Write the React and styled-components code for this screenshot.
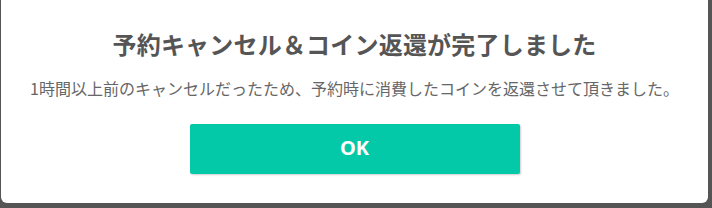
import React from 'react';
import styled, { createGlobalStyle } from 'styled-components';

const GlobalStyle = createGlobalStyle`
    html, body {
        margin: 0;
        padding: 0;
        background: #555555;
    }
    body {
        font-family: "Noto Sans CJK JP", "Noto Sans", sans-serif;
    }
`

const Overlay = styled.div`
    padding: 0 4px 5px 1px;
    background: #555555;
`

const Dialog = styled.div`
    background: #ffffff;
    border-radius: 0 0 6px 6px;
    padding: 28px 20px 29px;
    display: flex;
    flex-direction: column;
    align-items: center;
`

const Title = styled.h2`
    margin: 0;
    font-size: 24px;
    line-height: 32px;
    font-weight: 700;
    color: #555555;
    letter-spacing: 0.2px;
`

const Message = styled.p`
    margin: 16px 0 0;
    font-size: 16px;
    line-height: 24px;
    font-weight: 400;
    color: #666666;
`

const OkButton = styled.button`
    margin-top: 24px;
    width: 330px;
    height: 50px;
    padding: 0 0 3px;
    border: none;
    border-radius: 2px;
    background: #03c9a8;
    color: #ffffff;
    font-family: "Noto Sans", "Noto Sans CJK JP", sans-serif;
    font-size: 20px;
    font-weight: 700;
    box-shadow: 1px 1px 2px rgba(0, 0, 0, 0.2);
    cursor: pointer;
`

export default function App() {
    return (
        <>
            <GlobalStyle />
            <Overlay>
                <Dialog>
                    <Title>予約キャンセル＆コイン返還が完了しました</Title>
                    <Message>1時間以上前のキャンセルだったため、予約時に消費したコインを返還させて頂きました。</Message>
                    <OkButton>OK</OkButton>
                </Dialog>
            </Overlay>
        </>
    );
}
